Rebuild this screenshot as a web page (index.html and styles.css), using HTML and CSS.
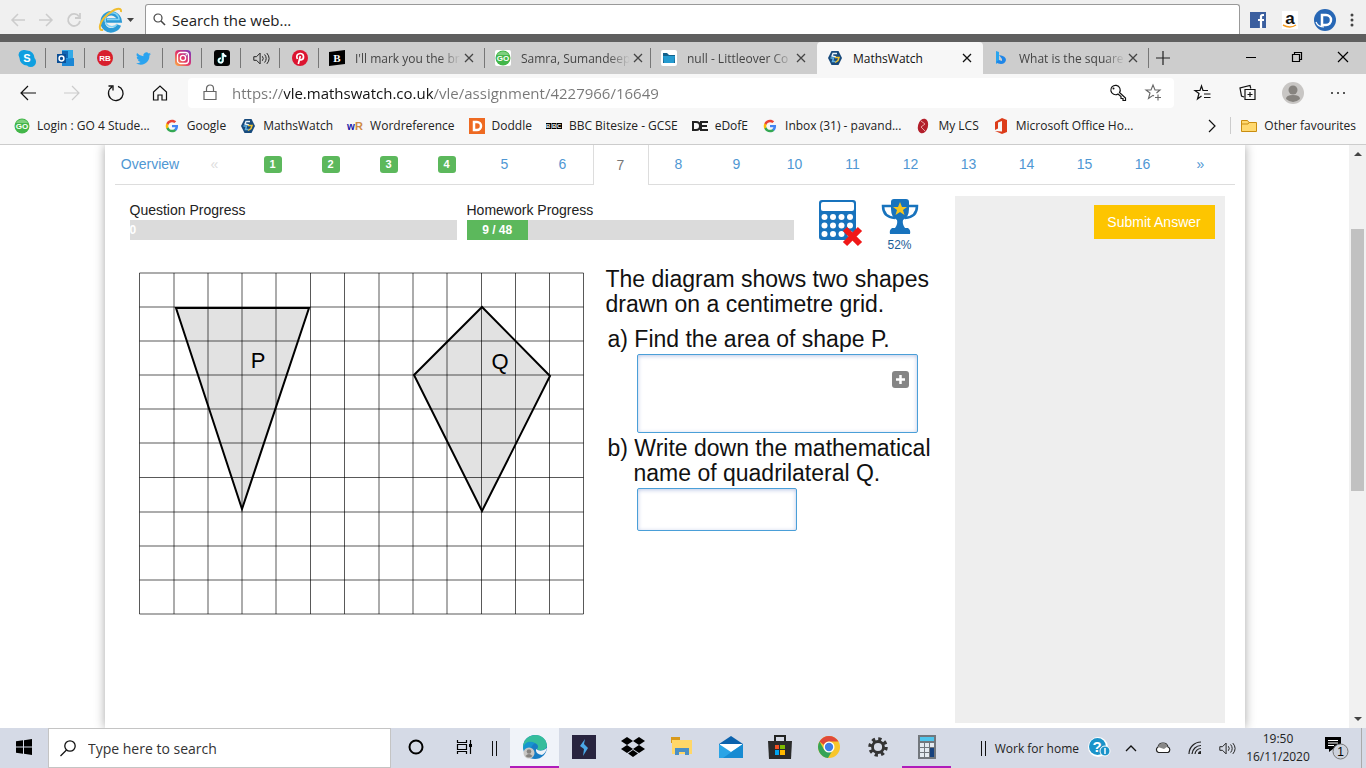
FILE: index.html
```
<!DOCTYPE html>
<html lang="en">
<head>
  <meta charset="UTF-8">
  <meta name="viewport" content="width=device-width, initial-scale=1.0">
  <title>MathsWatch</title>
  <link rel="stylesheet" href="styles.css">
</head>
<body>
  <!-- Shared icons -->
  <svg class="symbols" aria-hidden="true">
    <symbol id="close" viewBox="0 0 16 16"><path d="M4 4l8 8M12 4l-8 8" fill="none" stroke="currentColor" stroke-width="1.3"/></symbol>
    <symbol id="google" viewBox="-5 -5 58 58">
      <path fill="#4285f4" d="M46 24.500c0-1.600-.1-3-.4-4.500H24v8.600h12.400c-.5 2.800-2.100 5.200-4.600 6.800v5.700h7.400C43.500 37.100 46 31.300 46 24.500z"/>
      <path fill="#34a853" d="M24 47c6.200 0 11.400-2 15.200-5.600l-7.400-5.700c-2 1.400-4.700 2.200-7.800 2.200-6 0-11-4-12.800-9.500H3.600v5.900C7.400 41.800 15.100 47 24 47z"/>
      <path fill="#fbbc05" d="M11.200 28.400c-.9-2.800-.9-6 0-8.800v-5.900H3.600c-3.200 6.400-3.200 14.200 0 20.600z"/>
      <path fill="#ea4335" d="M24 10.100c3.400 0 6.400 1.200 8.800 3.400l6.500-6.500C35.400 3.300 30.200 1 24 1 15.100 1 7.400 6.200 3.600 13.700l7.600 5.900C13 14.100 18 10.100 24 10.100z"/>
    </symbol>
    <symbol id="mathswatch" viewBox="0 0 16 16">
      <path d="M4.500 1h7L15 8l-3.500 7h-7L1 8z" fill="#174a7c"/>
      <path d="M10 3.500H6L5 6l4 1" fill="none" stroke="#e8f3fa" stroke-width="1.300"/>
      <path d="M8 7.500h4l-1 3-3 2" fill="none" stroke="#f0c330" stroke-width="1.500"/>
      <path d="M3.500 8h3l-1 3.500h3" fill="none" stroke="#5fb0e0" stroke-width="1.500"/>
    </symbol>
    <symbol id="speaker" viewBox="0 0 20 16">
      <path d="M2 6h3l4-4v12L5 10H2zM11.500 5.500q2 2.500 0 5M14 3.500q3.500 4.500 0 9M16.500 2q5 6 0 12" fill="none" stroke="currentColor" stroke-width="1.100"/>
    </symbol>
  </svg>

  <!-- Desktop search bar -->
  <header class="deskbar">
    <button class="desk-nav" aria-label="Back"><svg width="16" height="16" viewBox="0 0 16 16"><path d="M15 8H2M8 2L2 8l6 6" fill="none" stroke="currentColor" stroke-width="1.500"/></svg></button>
    <button class="desk-nav" aria-label="Forward"><svg width="16" height="16" viewBox="0 0 16 16"><path d="M1 8h13M8 2l6 6-6 6" fill="none" stroke="currentColor" stroke-width="1.500"/></svg></button>
    <button class="desk-nav" aria-label="Reload"><svg width="16" height="16" viewBox="0 0 16 16"><path d="M13 4.500A6 6 0 1 0 14 9M14 1v5H9" fill="none" stroke="currentColor" stroke-width="1.800"/></svg></button>
    <button class="desk-browser" aria-label="Internet Explorer">
      <svg width="26" height="26" viewBox="0 0 26 26">
        <path d="M21 18A8.500 8.500 0 1 1 21.500 13.500H8" fill="none" stroke="#2c9bd6" stroke-width="4.500"/>
        <path d="M19.500 17A7 7 0 1 1 21 12.500H9" fill="none" stroke="#82d3f5" stroke-width="1.500"/>
        <path d="M5 23C-1 24 2 14 9 8S24-1 23 5" fill="none" stroke="#f0bd2e" stroke-width="2"/>
      </svg>
      <svg width="8" height="5" viewBox="0 0 8 5"><path d="M0 0h7L3.500 4z" fill="#444"/></svg>
    </button>
    <div class="desk-search">
      <svg width="13" height="13" viewBox="0 0 13 13"><path d="M8 8l4 4" stroke="#444" stroke-width="1.600"/><circle cx="5" cy="5" r="4" fill="none" stroke="#444" stroke-width="1.200"/></svg>
      <input type="text" value="Search the web..." aria-label="Search the web">
    </div>
    <div class="desk-links">
      <a href="#" aria-label="Facebook"><svg width="16" height="16" viewBox="0 0 16 16"><path fill="#3b5f9f" d="M0 0h16v16H0z"/><path d="M14 3h-1.500Q11 3 11 4.500V16M8 8h6" fill="none" stroke="#fff" stroke-width="2.200"/></svg></a>
      <a href="#" aria-label="Amazon"><svg width="16" height="18" viewBox="0 0 16 18"><path fill="#fff" d="M0 0h16v18H0z"/><text x="8" y="13" font-size="17" font-weight="bold" text-anchor="middle" fill="#111">a</text><path d="M1 14q7 4 13 0" fill="none" stroke="#f59a1b" stroke-width="1.500"/></svg></a>
      <a href="#" aria-label="Daily"><svg width="22" height="22" viewBox="0 0 22 22"><circle cx="11" cy="11" r="11" fill="#2767b5"/><path d="M8 6h4a5 5 0 0 1 0 10H8z" fill="none" stroke="#fff" stroke-width="2.500"/><path d="M2 13q2 5 8 5" fill="none" stroke="#fff" stroke-width="1.200"/></svg></a>
      <button aria-label="Menu"><svg width="4" height="14" viewBox="0 0 4 14" fill="#444"><circle cx="2" cy="2" r="1.500"/><circle cx="2" cy="7" r="1.500"/><circle cx="2" cy="12" r="1.500"/></svg></button>
    </div>
  </header>

  <!-- Browser tabs -->
  <nav class="tabstrip">
    <a class="pin" href="#" aria-label="Skype"><svg width="16" height="16" viewBox="0 0 16 16"><path d="M5 0a5 5 0 0 1 3 .5A7.500 7.500 0 0 1 15.500 8 5 5 0 0 1 8 15.500 7.500 7.500 0 0 1 .5 8 5 5 0 0 1 5 0z" fill="#0f9fe0"/><text x="8" y="12" font-size="11" font-weight="bold" text-anchor="middle" fill="#fff">S</text></svg></a>
    <a class="pin" href="#" aria-label="Outlook"><svg width="17" height="16" viewBox="0 0 17 16"><path fill="#32a9e7" d="M5 0h11v14H5z"/><path fill="#1066b5" d="M5 1h6v7H5z"/><path fill="#1b86d4" d="M5 9l12-1v8H5z"/><path fill="#0b4f96" d="M0 4h9v9H0z"/><circle cx="4.500" cy="8.500" r="2.400" fill="none" stroke="#fff" stroke-width="1.500"/></svg></a>
    <a class="pin" href="#" aria-label="Redbubble"><svg width="16" height="16" viewBox="0 0 16 16"><circle cx="8" cy="8" r="8" fill="#d81f2c"/><text x="8" y="11" font-size="8" font-weight="bold" text-anchor="middle" fill="#fff">RB</text></svg></a>
    <a class="pin" href="#" aria-label="Twitter"><svg width="15" height="15" viewBox="0 0 24 24"><path fill="#2aa3ef" d="M24 4.600a10 10 0 0 1-2.800.8 5 5 0 0 0 2.100-2.700 10 10 0 0 1-3.100 1.200 4.900 4.900 0 0 0-8.400 4.500A14 14 0 0 1 1.700 3.200a4.900 4.900 0 0 0 1.500 6.500 5 5 0 0 1-2.200-.6 5 5 0 0 0 4 4.900 5 5 0 0 1-2.300.1 5 5 0 0 0 4.600 3.400A10 10 0 0 1 0 19.500 14 14 0 0 0 21.500 7.100 10 10 0 0 0 24 4.600z"/></svg></a>
    <a class="pin" href="#" aria-label="Instagram"><svg width="16" height="16" viewBox="0 0 16 16"><defs><linearGradient id="insta" x1="0" y1="1" x2="1" y2="0"><stop offset="0" stop-color="#fdb241"/><stop offset=".5" stop-color="#e1306c"/><stop offset="1" stop-color="#6f3cc4"/></linearGradient></defs><rect width="16" height="16" rx="4" fill="url(#insta)"/><rect x="2.500" y="2.500" width="11" height="11" rx="3" fill="none" stroke="#fff" stroke-width="1.300"/><circle cx="8" cy="8" r="2.600" fill="none" stroke="#fff" stroke-width="1.300"/><circle cx="11.300" cy="4.700" r=".8" fill="#fff"/></svg></a>
    <a class="pin" href="#" aria-label="TikTok"><svg width="16" height="16" viewBox="0 0 16 16"><rect width="16" height="16" rx="3" fill="#050505"/><path d="M8.500 3v7.500a2 2 0 1 1-2-2M8.500 3q.5 3 3.500 3.200" fill="none" stroke="#39d5d8" stroke-width="2"/><path d="M9 3v7.500a2.200 2.200 0 1 1-2-2.200M9 3q.5 3 3.500 3.200" fill="none" stroke="#fff" stroke-width="1.600"/></svg></a>
    <a class="pin" href="#" aria-label="Playing audio"><svg width="18" height="15"><use href="#speaker"/></svg></a>
    <a class="pin" href="#" aria-label="Pinterest"><svg width="16" height="16" viewBox="0 0 16 16"><circle cx="8" cy="8" r="8" fill="#dc1430"/><path d="M5.300 9Q3.500 4 8 3.500c4.500-.2 4.500 6 1 6.300Q7.500 9.700 7.300 9M8.300 6L6.300 14" fill="none" stroke="#fff" stroke-width="1.700"/></svg></a>
    <a class="tab" href="#">
      <svg width="16" height="16" viewBox="0 0 16 16"><path d="M0 2l16-2v14L0 16z"/><text x="8" y="12" font-size="11" font-weight="bold" text-anchor="middle" fill="#fff" class="slab">B</text></svg>
      <span class="fade">I'll mark you the br</span><svg class="close" width="16" height="16"><use href="#close"/></svg>
    </a>
    <a class="tab" href="#">
      <svg class="on-white" width="16" height="16" viewBox="0 0 16 16"><circle cx="8" cy="8" r="7.500" fill="#43b649"/><path d="M2 5a7 7 0 0 1 12 0" fill="#7ed07f"/><text x="8" y="11" font-size="8" font-weight="bold" text-anchor="middle" fill="#fff">GO</text></svg>
      <span class="fade">Samra, Sumandeep</span><svg class="close" width="16" height="16"><use href="#close"/></svg>
    </a>
    <a class="tab" href="#">
      <svg class="on-white" width="16" height="16" viewBox="0 0 16 16"><path d="M2 3h4l2 2h6v8H2z" fill="#14628c"/><path d="M2 6h12l-1 7H3z" fill="#259bd0"/></svg>
      <span class="fade">null - Littleover Co</span><svg class="close" width="16" height="16"><use href="#close"/></svg>
    </a>
    <a class="tab active" href="#">
      <svg width="16" height="16"><use href="#mathswatch"/></svg>
      <span>MathsWatch</span><svg class="close" width="16" height="16"><use href="#close"/></svg>
    </a>
    <a class="tab" href="#">
      <svg width="16" height="16" viewBox="0 0 16 16"><path d="M3 1l3 1v10l-3 2z" fill="#2aa5ee"/><path d="M6 5q7 1 7 5-1 4-5 4-3 0-5-2l3-2 3 1V9z" fill="#1f86e8"/></svg>
      <span class="fade">What is the square</span><svg class="close" width="16" height="16"><use href="#close"/></svg>
    </a>
    <button class="new-tab" aria-label="New tab"><svg width="14" height="14" viewBox="0 0 14 14"><path d="M7 0v14M0 7h14" stroke="#222" stroke-width="1.200"/></svg></button>
    <div class="window-buttons">
      <button aria-label="Minimise"><svg width="10" height="10" viewBox="0 0 10 10"><path d="M0 5.500h10" stroke="#000"/></svg></button>
      <button aria-label="Restore"><svg width="10" height="10" viewBox="0 0 10 10"><path d="M.5 2.500h7v7h-7zM2.500 2V.5h7v7H8" fill="none" stroke="#000" stroke-width="1.200"/></svg></button>
      <button aria-label="Close"><svg width="10" height="10" viewBox="0 0 10 10"><path d="M0 0l10 10M10 0L0 10" stroke="#000" stroke-width="1.200"/></svg></button>
    </div>
  </nav>

  <!-- Address row -->
  <div class="toolbar">
    <button aria-label="Back"><svg width="16" height="16" viewBox="0 0 16 16"><path d="M16 8H1M8 1L1 8l7 7" fill="none" stroke="#111" stroke-width="1.200"/></svg></button>
    <button aria-label="Forward"><svg width="16" height="16" viewBox="0 0 16 16"><path d="M0 8h15M8 1l7 7-7 7" fill="none" stroke="#ccc" stroke-width="1.200"/></svg></button>
    <button aria-label="Refresh"><svg width="18" height="18" viewBox="0 0 18 18"><path d="M11 2.300A7.300 7.300 0 1 1 5 3M1.500 2H6v4.500" fill="none" stroke="#111" stroke-width="1.300"/></svg></button>
    <button aria-label="Home"><svg width="16" height="16" viewBox="0 0 16 16"><path d="M1.500 15V7L8 1l6.500 6v8H10v-5H6v5z" fill="none" stroke="#111" stroke-width="1.200"/></svg></button>
    <div class="address">
      <svg width="14" height="18" viewBox="0 0 14 18"><path d="M1 7.500h12v8H1zM3.500 7V4.500a3.500 3.500 0 0 1 7 0V7" fill="none" stroke="#666" stroke-width="1.200"/></svg>
      <input type="text" value="https://vle.mathswatch.co.uk/vle/assignment/4227966/16649" aria-label="Address">
      <button aria-label="Saved passwords"><svg width="18" height="18" viewBox="0 0 18 18"><path d="M10.500 8.500l6 5.500v2.500H14v-2h-2v-2l-3-2.500A4.700 4.700 0 1 1 10.500 8.500z" fill="none" stroke="#111" stroke-width="1.200"/><circle cx="4.500" cy="4.500" r="1" fill="#111"/></svg></button>
      <button aria-label="Add to favourites"><svg width="18" height="18" viewBox="0 0 18 18"><path d="M9 11l-1-.7L3.500 13.500 5 8 1 5h5l2-5 2 5h5l-3.500 3M13 9.500v6M10 12.500h6" transform="translate(0 1)" fill="none" stroke="#666" stroke-width="1.100"/></svg></button>
    </div>
    <button aria-label="Favourites"><svg width="18" height="16" viewBox="0 0 18 16"><path d="M14 5.500H9L7.500 1 6 5.500H1l4 3-1.500 5.500 4-3M7.500 1L9 5.500M10 9h6.500M10 12.500h6.500" fill="none" stroke="#111" stroke-width="1.200"/></svg></button>
    <button aria-label="Collections"><svg width="18" height="18" viewBox="0 0 18 18"><path d="M5 4.500h10v10H5zM10 7v5M7.500 9.500h5M4 12l-2.500-1L0 3 10 .5l.8 3" transform="translate(1 1)" fill="none" stroke="#111" stroke-width="1.200"/></svg></button>
    <button aria-label="Profile"><svg width="22" height="22" viewBox="0 0 22 22"><circle cx="11" cy="11" r="11" fill="#c8c6c4"/><circle cx="11" cy="8" r="4.500" fill="#86837f"/><path d="M4 17q0-4 7-4t7 4q-7 6-14 0z" fill="#86837f"/></svg></button>
    <button aria-label="Settings and more"><svg width="16" height="4" viewBox="0 0 16 4" fill="#222"><circle cx="2" cy="2" r="1"/><circle cx="8" cy="2" r="1"/><circle cx="14" cy="2" r="1"/></svg></button>
  </div>

  <!-- Favourites bar -->
  <nav class="bookmarks">
    <a href="#"><svg width="16" height="16" viewBox="0 0 16 16"><circle cx="8" cy="8" r="7.500" fill="#43b649"/><path d="M2 5a7 7 0 0 1 12 0" fill="#7ed07f"/><text x="8" y="11" font-size="8" font-weight="bold" text-anchor="middle" fill="#fff">GO</text></svg>Login : GO 4 Stude...</a>
    <a href="#"><svg width="16" height="16"><use href="#google"/></svg>Google</a>
    <a href="#"><svg width="16" height="16"><use href="#mathswatch"/></svg>MathsWatch</a>
    <a href="#"><svg width="16" height="16" viewBox="0 0 16 16" font-weight="bold" font-size="10"><text x="0" y="12" fill="#1717a8">w</text><text x="8" y="12" font-size="11" fill="#cf8a45">R</text></svg>Wordreference</a>
    <a href="#"><svg width="16" height="16" viewBox="0 0 16 16"><path fill="#ee6a22" d="M0 0h16v16H0z"/><path d="M5 4h3a4 4 0 0 1 0 8H5z" fill="none" stroke="#fff" stroke-width="2.500"/></svg>Doddle</a>
    <a href="#"><svg width="16" height="16" viewBox="0 0 16 16"><path d="M0 5h5v6H0zM5.500 5h5v6h-5zM11 5h5v6h-5z"/><text y="10" font-size="6" font-weight="bold" fill="#fff"><tspan x="0">B</tspan><tspan x="6">B</tspan><tspan x="11">C</tspan></text></svg>BBC Bitesize - GCSE</a>
    <a href="#"><svg width="16" height="16" viewBox="0 0 16 16"><path d="M1 4v8h3q4 0 4-4T4 4zM16 4H9v8h7M8 8h7" fill="none" stroke="#222" stroke-width="2"/></svg>eDofE</a>
    <a href="#"><svg width="16" height="16"><use href="#google"/></svg>Inbox (31) - pavand...</a>
    <a href="#"><svg width="16" height="16" viewBox="0 0 16 16"><ellipse cx="8" cy="8" rx="5" ry="7.500" fill="#b31f2b" transform="rotate(15 8 8)"/><path d="M6 3l4 3-4 3 4 4" fill="none" stroke="#e8a2a2"/></svg>My LCS</a>
    <a href="#"><svg width="16" height="16" viewBox="0 0 16 16"><path d="M9 0l5 2v12l-5 2-7-3 7 .5V3L5 4.500v6L2 12V4z" fill="#dc3c1a"/></svg>Microsoft Office Ho...</a>
    <button aria-label="More favourites"><svg width="8" height="14" viewBox="0 0 8 14"><path d="M1 1l6 6-6 6" fill="none" stroke="#111" stroke-width="1.200"/></svg></button>
    <a class="other" href="#"><svg width="16" height="14" viewBox="0 0 16 14"><path d="M.5 1.500h6l1.500 2h7.500v9H.5z" fill="#ffd970" stroke="#c98d10"/><path d="M1 5h6l1-1.500" fill="none" stroke="#c98d10"/></svg>Other favourites</a>
  </nav>

  <!-- Page -->
  <div class="viewport">
    <main class="container">
      <nav class="questions">
        <a class="overview" href="#">Overview</a>
        <a class="disabled" href="#">«</a>
        <a href="#"><span class="badge">1</span></a>
        <a href="#"><span class="badge">2</span></a>
        <a href="#"><span class="badge">3</span></a>
        <a href="#"><span class="badge">4</span></a>
        <a href="#">5</a>
        <a href="#">6</a>
        <a class="current" href="#">7</a>
        <a href="#">8</a>
        <a href="#">9</a>
        <a href="#">10</a>
        <a href="#">11</a>
        <a href="#">12</a>
        <a href="#">13</a>
        <a href="#">14</a>
        <a href="#">15</a>
        <a href="#">16</a>
        <a href="#">»</a>
      </nav>
      <div class="workspace">
        <section class="question">
          <div class="status">
            <div class="progress-group">
              Question Progress
              <div class="progress"><div class="bar empty">0</div></div>
            </div>
            <div class="progress-group">
              Homework Progress
              <div class="progress"><div class="bar" style="width: 18.75%">9 / 48</div></div>
            </div>
            <svg class="calculator" width="45" height="48" viewBox="0 0 45 48" role="img" aria-label="Calculator not allowed">
              <rect x="1" y="1" width="37" height="40" rx="3" fill="#1873bd"/>
              <rect x="3" y="3" width="33" height="9" rx="2" fill="#fff"/>
              <g fill="#fff">
                <circle cx="6.500" cy="18" r="3"/><circle cx="15" cy="18" r="3"/><circle cx="23.500" cy="18" r="3"/><circle cx="32" cy="18" r="3"/>
                <circle cx="6.500" cy="26.500" r="3"/><circle cx="15" cy="26.500" r="3"/><circle cx="23.500" cy="26.500" r="3"/><circle cx="32" cy="26.500" r="3"/>
                <circle cx="6.500" cy="35" r="3"/><circle cx="15" cy="35" r="3"/><circle cx="23.500" cy="35" r="3"/><circle cx="32" cy="35" r="3"/>
              </g>
              <path d="M27 30l15 15M42 30L27 45" stroke="#f01818" stroke-width="6"/>
            </svg>
            <div class="score">
              <svg width="38" height="36" viewBox="0 0 38 36">
                <path d="M10 7H2q0 11 12 12M28 7h8q0 11-12 12" fill="none" stroke="#1873bd" stroke-width="2.500"/>
                <path d="M10 3q0-3 3-3h12q3 0 3 3v7q0 8-6 11-1 4 2 8h3q3 2 2 6H9q-1-4 2-6h3q3-4 2-8-6-3-6-11z" fill="#1873bd"/>
                <path d="M19 3l2 5h5l-4 3 1.500 5-4.500-3-4.500 3 1.500-5-4-3h5z" fill="#f6c51e"/>
              </svg>
              52%
            </div>
          </div>
          <div class="task">
            <svg class="diagram" width="446" height="344" viewBox="0 0 446 344" role="img" aria-label="Shapes P and Q on a centimetre grid">
              <path d="M37 36h133l-67 201zM343 35l68 69-68 135-68-136z" fill="#e2e2e2"/>
              <path d="M.5 1v341M35 1v341M69 1v341M103 1v341M137 1v341M171.500 1v341M205.500 1v341M240 1v341M274 1v341M308 1v341M342.500 1v341M376.500 1v341M410.500 1v341M444.500 1v341" stroke="#000" stroke-opacity=".65"/>
              <path d="M.5 1h444M.5 35h444M.5 69h444M.5 103h444M.5 137h444M.5 171h444M.5 205.500h444M.5 240h444M.5 274h444M.5 308h444M.5 342h444" stroke="#000" stroke-opacity=".65"/>
              <path d="M37 36h133l-67 201zM343 35l68 69-68 135-68-136z" fill="none" stroke="#000" stroke-width="2"/>
              <text x="119" y="96" font-size="22" text-anchor="middle">P</text>
              <text x="361" y="97" font-size="22" text-anchor="middle">Q</text>
            </svg>
            <form class="answers">
              <p>The diagram shows two shapes drawn on a centimetre grid.</p>
              <label for="area">a) Find the area of shape P.</label>
              <div class="area-field">
                <textarea id="area"></textarea>
                <button type="button" aria-label="Insert symbol"><svg width="17" height="17" viewBox="0 0 17 17"><rect width="17" height="17" rx="3" fill="#858585"/><path d="M8.500 4v9M4 8.500h9" stroke="#fff" stroke-width="2.500"/></svg></button>
              </div>
              <label for="shape-name">b) Write down the mathematical name of quadrilateral Q.</label>
              <input type="text" id="shape-name">
            </form>
          </div>
        </section>
        <aside class="side-panel"><button class="submit-btn">Submit Answer</button></aside>
      </div>
    </main>
    <div class="scrollbar"><i class="arrow up"></i><i class="thumb"></i><i class="arrow down"></i></div>
  </div>

  <!-- Windows taskbar -->
  <footer class="taskbar">
    <button class="task-icon start" aria-label="Start"><svg width="16" height="16" viewBox="0 0 16 16"><path d="M0 2.300l7-1v6.200H0zM8 1.200L16 0v7.500H8zM0 8.500h7v6.200l-7-1zM8 8.500h8V16l-8-1.200z"/></svg></button>
    <div class="task-search">
      <svg width="16" height="16" viewBox="0 0 16 16"><circle cx="10" cy="6" r="5.200" fill="none" stroke="#111" stroke-width="1.300"/><path d="M6.500 10L.5 16" stroke="#111" stroke-width="1.300"/></svg>
      <input type="text" placeholder="Type here to search" aria-label="Type here to search">
    </div>
    <button class="task-icon" aria-label="Cortana"><svg width="16" height="16" viewBox="0 0 16 16"><circle cx="8" cy="8" r="6.500" fill="none" stroke="#000" stroke-width="2"/></svg></button>
    <button class="task-icon" aria-label="Task view"><svg width="16" height="16" viewBox="0 0 16 16"><path d="M.5 1v2.500h9V1M.5 5.500h9v5h-9zM.5 15v-2.500h9V15M13.500 1v14" fill="none" stroke="#000" stroke-width="1.200"/><path d="M12 5h3v3h-3z"/></svg></button>
    <i class="grip"></i>
    <button class="task-icon open focused" aria-label="Microsoft Edge"><svg width="24" height="24" viewBox="0 0 24 24"><circle cx="12" cy="12" r="12" fill="#187cc4"/><path d="M0 11C2-3 22-4 24 10c0 5-7 7-10 4 3-3-1-7-6-6-5 0-7 3-8 7z" fill="#35bd9c"/><path d="M0 12q4-8 12-4-6 4-3 10Q2 20 0 12z" fill="#1795cf"/><path d="M13 14q5 4 11-1-1 5-5 7-7-1-6-6z" fill="#eef2f8"/><circle cx="6" cy="18" r="5.500" fill="#c8c6c4"/><circle cx="6" cy="16.500" r="2.300" fill="#85827f"/><path d="M2.500 21q3.500-4 7 0-3.500 3-7 0z" fill="#85827f"/></svg></button>
    <button class="task-icon" aria-label="Shift app"><svg width="24" height="24" viewBox="0 0 24 24"><path fill="#28243f" d="M0 0h24v24H0z"/><path d="M13 4l-5 7 4 3-1 7 5-8-4-4z" fill="#4aa7e6"/></svg></button>
    <button class="task-icon" aria-label="Dropbox"><svg width="24" height="20" viewBox="0 0 24 20"><path d="M6 0l6 4-6 4-6-4zM18 0l6 4-6 4-6-4zM6 8l6 4-6 4-6-4zM18 8l6 4-6 4-6-4zM12 13l5 3.500-5 3.500-5-3.500z"/></svg></button>
    <button class="task-icon" aria-label="File Explorer"><svg width="22" height="20" viewBox="0 0 22 20"><path fill="#d99a1c" d="M0 0h9v6H0z"/><path fill="#ffd768" d="M1 3h20v14H1z"/><path d="M4 18v-7h14v7h-4v-3H8v3z" fill="#4b8fc4"/></svg></button>
    <button class="task-icon" aria-label="Mail"><svg width="24" height="22" viewBox="0 0 24 22"><path d="M0 8l12-8 12 8v14H0z" fill="#0b62ad"/><path d="M1 8h22v10H1z" fill="#fff"/><path d="M0 8l12 8 12-8v14H0z" fill="#2aa4e6"/><path d="M24 8v14H4z" fill="#178bd2"/></svg></button>
    <button class="task-icon" aria-label="Microsoft Store"><svg width="24" height="24" viewBox="0 0 24 24"><path d="M7 6V1h10v5" fill="none" stroke="#222" stroke-width="2"/><path fill="#2b2b2b" d="M0 6h24l-1 18H1z"/><path fill="#f25022" d="M7 10h4v4H7z"/><path fill="#7fba00" d="M12 10h5v4h-5z"/><path fill="#00a4ef" d="M7 15h4v5H7z"/><path fill="#ffb900" d="M12 15h5v5h-5z"/></svg></button>
    <button class="task-icon" aria-label="Chrome"><svg width="22" height="22" viewBox="0 0 22 22"><circle cx="11" cy="11" r="11" fill="#f8c62c"/><path d="M1.500 5.500A11 11 0 0 1 20.500 5.500H11a5.500 5.500 0 0 0-5 3.500z" fill="#e0493a"/><path d="M1.500 5.500A11 11 0 0 0 10 22l5-8.500a5.500 5.500 0 0 1-9 0z" fill="#35a457"/><circle cx="11" cy="11" r="5.500" fill="#fff"/><circle cx="11" cy="11" r="4.200" fill="#3f7ee8"/></svg></button>
    <button class="task-icon" aria-label="Settings"><svg width="20" height="20" viewBox="0 0 20 20"><circle cx="10" cy="10" r="8" fill="none" stroke="#333" stroke-width="3.500" stroke-dasharray="3.200 3.083"/><circle cx="10" cy="10" r="5.500" fill="none" stroke="#333" stroke-width="2.800"/></svg></button>
    <button class="task-icon open" aria-label="Calculator"><svg width="18" height="24" viewBox="0 0 18 24"><path fill="#72777d" d="M0 0h18v24H0z"/><path fill="#4fc5ec" d="M2 2h14v4H2z"/><path fill="#e4eaf0" d="M2 8h4v4H2zM7 8h4v4H7zM12 8h4v4h-4zM2 13h4v4H2zM7 13h4v4H7zM2 18h4v4H2zM7 18h4v4H7z"/><path fill="#17427e" d="M12 13h4v9h-4z"/></svg></button>
    <div class="tray">
      <i class="grip"></i>
      <span class="tray-label">Work for home</span>
      <button aria-label="Help"><svg width="22" height="22" viewBox="0 0 22 22"><circle cx="10" cy="10" r="10" fill="#fff"/><circle cx="9.500" cy="9.500" r="8.500" fill="#1b93c9"/><text x="9" y="15" font-size="15" font-weight="bold" text-anchor="middle" fill="#fff">?</text><circle cx="17" cy="14" r="5" fill="#1b93c9" stroke="#fff"/><path d="M17 11v6" stroke="#fff" stroke-width="1.500"/></svg></button>
      <button aria-label="Show hidden icons"><svg width="12" height="7" viewBox="0 0 12 7"><path d="M1 6l5-5 5 5" fill="none" stroke="#111" stroke-width="1.300"/></svg></button>
      <button aria-label="OneDrive"><svg width="16" height="12" viewBox="0 0 16 12"><path d="M3.500 10.500a3 3 0 0 1-.5-5.500q1-4 5-4t5 4a3 3 0 0 1 0 5.500z" fill="#fff" stroke="#222" stroke-width="1.200"/><path d="M3 5q1-4 5-4t4.500 3.500L9 7z" fill="#888"/></svg></button>
      <button aria-label="Wi-Fi"><svg width="14" height="14" viewBox="0 0 14 14"><path d="M1 13A12 12 0 0 1 13 1M4 13a9 9 0 0 1 9-8.500M7 13a6 6 0 0 1 6-5.500" fill="none" stroke="#222" stroke-width="1.200"/><path d="M10 13q0-3 3-3v3z" fill="#222"/></svg></button>
      <button aria-label="Volume"><svg width="18" height="15"><use href="#speaker"/></svg></button>
      <button class="clock">19:50<br>16/11/2020</button>
      <button class="notices" aria-label="1 notification"><svg width="24" height="24" viewBox="0 0 24 24"><path d="M0 1h16v12H8l-4 3v-3H0z"/><path d="M3 4.500h10M3 7h10M3 9.500h6" stroke="#fff"/><circle cx="15.500" cy="15.500" r="7.500" fill="#cdd2dd" stroke="#777"/><text x="15.500" y="20" font-size="12" text-anchor="middle">1</text></svg></button>
    </div>
  </footer>
</body>
</html>
```
FILE: styles.css
```
* {
  box-sizing: border-box;
}
body {
  font-family: 'Open Sans', 'Noto Sans', sans-serif;
  font-size: 12px;
  color: #222;
  margin: 0;
  height: 100vh;
  display: flex;
  flex-direction: column;
  overflow: hidden;
  background: #fff;
}
a {
  color: inherit;
  text-decoration: none;
}
button {
  display: flex;
  align-items: center;
  justify-content: center;
  padding: 0;
  border: none;
  background: none;
  font: inherit;
  color: inherit;
  cursor: pointer;
}
input {
  min-width: 0;
  font: inherit;
  color: inherit;
  border: none;
  padding: 0;
  background: none;
  outline: none;
}
svg {
  flex: none;
  display: block;
  overflow: visible;
}
svg text {
  font-family: 'Liberation Sans', Arial, sans-serif;
}
svg text.slab {
  font-family: 'Liberation Serif', serif;
}
.symbols {
  position: absolute;
  width: 0;
  height: 0;
}

/* Desktop search bar */
.deskbar {
  display: flex;
  flex: none;
  height: 42px;
  padding: 4px 12px 0 4px;
  background: #f0f0f0;
  border-bottom: 8px solid #5f5f5f;
}
.desk-nav {
  width: 28px;
  color: #ccc;
}
.desk-nav,
.desk-browser,
.desk-links {
  padding-top: 2px;
}
.desk-browser {
  width: 57px;
  gap: 3px;
}
.desk-search {
  flex: 1;
  display: flex;
  align-items: center;
  gap: 6px;
  padding: 0 7px;
  background: #fff;
  border: 1px solid #999;
  border-bottom: none;
  border-radius: 3px 3px 0 0;
  font-size: 15px;
}
.desk-search input {
  flex: 1;
}
.desk-links {
  display: flex;
  align-items: center;
  gap: 14px;
  padding-left: 10px;
}
.desk-links a:nth-child(2) {
  margin-left: 2px;
  margin-right: 2px;
}

/* Tabs */
.tabstrip {
  display: flex;
  flex: none;
  height: 32px;
  padding-left: 7px;
  background: #cdcdcd;
}
.pin,
.tab {
  display: flex;
  align-items: center;
  position: relative;
}
.pin {
  width: 39px;
  justify-content: center;
}
.pin::after,
.tab::after {
  content: '';
  position: absolute;
  right: 0;
  top: 6px;
  bottom: 6px;
  border-right: 1px solid #777;
}
.tab {
  flex: 0 1 166px;
  min-width: 0;
  padding: 0 8px 0 10px;
  color: #444;
}
.tab span {
  flex: 1;
  margin-left: 10px;
  white-space: nowrap;
}
.fade {
  -webkit-mask-image: linear-gradient(90deg, #000 80%, transparent);
  mask-image: linear-gradient(90deg, #000 80%, transparent);
}
.tab.active {
  background: #f7f7f7;
  border-radius: 4px 4px 0 0;
  color: #111;
}
.tab.active::after,
.tab:nth-child(11)::after {
  display: none;
}
.on-white {
  background: #fff;
  border-radius: 2px;
}
.new-tab {
  width: 28px;
}
.window-buttons {
  display: flex;
  margin-left: auto;
  padding-bottom: 3px;
}
.window-buttons button {
  width: 46px;
}

/* Address row */
.toolbar {
  display: flex;
  flex: none;
  align-items: center;
  height: 38px;
  padding: 0 6px;
  background: #f7f7f7;
}
.toolbar button {
  width: 44px;
}
.address {
  flex: 1;
  display: flex;
  align-items: center;
  height: 30px;
  margin: 0 6px;
  padding: 0 2px 0 15px;
  background: #fff;
  border-radius: 4px;
}
.toolbar .address ~ button {
  width: 45px;
}
/* host name is darker than the rest of the URL */
.address input {
  flex: 1;
  margin-left: 15px;
  font-size: 15px;
  color: transparent;
  background: linear-gradient(90deg, #777 52px, #111 52px, #111 201px, #777 201px);
  -webkit-background-clip: text;
  background-clip: text;
}
.toolbar .address button {
  width: 36px;
}

/* Favourites bar */
.bookmarks {
  display: flex;
  flex: none;
  align-items: center;
  gap: 14px;
  height: 33px;
  padding: 0 10px 5px 14px;
  background: #f7f7f7;
  border-bottom: 1px solid #ccc;
  white-space: nowrap;
}
.bookmarks a {
  display: flex;
  align-items: center;
  gap: 7px;
}
.bookmarks button {
  margin-left: auto;
}
.bookmarks .other {
  padding-left: 10px;
  border-left: 1px solid #ccc;
}

/* Page */
.viewport {
  flex: 1;
  min-height: 0;
  display: flex;
  overflow: hidden;
  font-family: 'Liberation Sans', Arial, sans-serif;
  font-size: 14px;
}
.container {
  width: 100%;
  max-width: 1140px;
  margin: 0 auto;
  padding: 0 10px;
  display: flex;
  flex-direction: column;
  box-shadow: 0 0 10px rgba(0, 0, 0, 0.35);
}
.questions {
  display: flex;
  flex: none;
  height: 40px;
  border-bottom: 1px solid #ddd;
  color: #4f97d3;
}
.questions a {
  flex: 0 1 58px;
  display: flex;
  align-items: center;
  justify-content: center;
  padding-bottom: 1px;
}
.questions .overview {
  flex-basis: 71px;
}
.questions .disabled {
  color: #ddd;
}
.questions .current {
  margin: 0 1px -1px;
  flex-basis: 56px;
  background: #fff;
  border: 1px solid #ddd;
  border-width: 0 1px;
  color: #777;
}
.badge {
  width: 18px;
  border-radius: 3px;
  background: #5cb85c;
  color: #fff;
  font-size: 11px;
  font-weight: bold;
  line-height: 17px;
  text-align: center;
}
.workspace {
  flex: 1;
  display: flex;
  padding: 11px 10px 5px 0;
}
.question {
  flex: 1;
  padding: 3px 10px 0 15px;
}
.status {
  display: flex;
  gap: 10px;
  height: 73px;
}
.progress-group {
  flex: 0 1 327px;
  padding-top: 1px;
  line-height: 20px;
}
.progress {
  background: #dbdbdb;
}
.bar {
  background: #5cb85c;
  color: #fff;
  font-size: 12px;
  font-weight: bold;
  text-align: center;
}
.bar.empty {
  background: none;
  text-align: left;
}
.calculator {
  margin-left: 14px;
}
.score {
  margin-left: 8px;
  font-size: 12px;
  line-height: 20px;
  color: #1a5c96;
  text-align: center;
}
.task {
  display: flex;
  gap: 21px;
  padding-left: 9px;
}
.answers {
  flex: 1;
  font-size: 23px;
  line-height: 25px;
  color: #111;
}
.answers p {
  margin: -5px 0 10px;
}
.answers label {
  display: block;
  padding-left: 28px;
  text-indent: -26px;
  margin-bottom: 2px;
}
.answers textarea,
.answers input {
  display: block;
  margin-left: 31px;
  border: 1px solid #4a9fd8;
  border-radius: 2px;
  background: #fff;
  box-shadow: inset 0 1px 4px rgba(80, 110, 190, 0.4);
}
.answers textarea {
  width: 281px;
  height: 79px;
  resize: none;
  outline: none;
}
.answers input {
  width: 160px;
  height: 43px;
}
.area-field {
  position: relative;
  width: 312px;
  margin-bottom: 3px;
}
.area-field button {
  position: absolute;
  top: 17px;
  right: 9px;
}
.side-panel {
  width: 270px;
  padding: 9px 10px;
  background: #eee;
}
.submit-btn {
  width: 121px;
  height: 34px;
  margin-left: auto;
  background: #fdc500;
  color: #fff;
}
.scrollbar {
  width: 17px;
  display: flex;
  flex-direction: column;
  align-items: center;
  padding: 7px 0;
  background: #f1f1f1;
}
.arrow {
  border: 4px solid transparent;
}
.arrow.up {
  border-top: none;
  border-bottom-color: #444;
}
.arrow.down {
  margin-top: auto;
  border-bottom: none;
  border-top-color: #444;
}
.thumb {
  width: 13px;
  height: 46%;
  margin-top: 73px;
  background: #c1c1c1;
}

/* Taskbar */
.taskbar {
  display: flex;
  flex: none;
  height: 40px;
  background: #d5dae6;
}
.task-icon {
  width: 49px;
  border-bottom: 2px solid transparent;
}
.task-icon.start {
  width: 48px;
}
.task-icon.open {
  border-bottom-color: #b01cba;
}
.task-icon.focused {
  background: #f0f3f9;
}
.task-search {
  flex: 0 1 343px;
  display: flex;
  align-items: center;
  gap: 12px;
  padding: 0 11px;
  background: #fff;
  border: 1px solid #c4c4c4;
  font-size: 14px;
}
.task-search input {
  flex: 1;
}
.task-search input::placeholder {
  color: #333;
  opacity: 1;
}
.grip {
  align-self: center;
  width: 5px;
  height: 15px;
  margin: 0 13px 0 3px;
  border: 1px solid #111;
  border-width: 0 1px;
}
.tray {
  display: flex;
  margin-left: auto;
  padding-right: 4px;
}
.tray .grip {
  margin: 0 9px 0 0;
}
.tray-label {
  align-self: center;
  margin-right: 4px;
}
.tray button {
  width: 32px;
}
.tray .clock {
  width: 70px;
  line-height: 18px;
}
.tray .notices {
  width: 49px;
  border-right: 1px solid #aaa;
}
```
